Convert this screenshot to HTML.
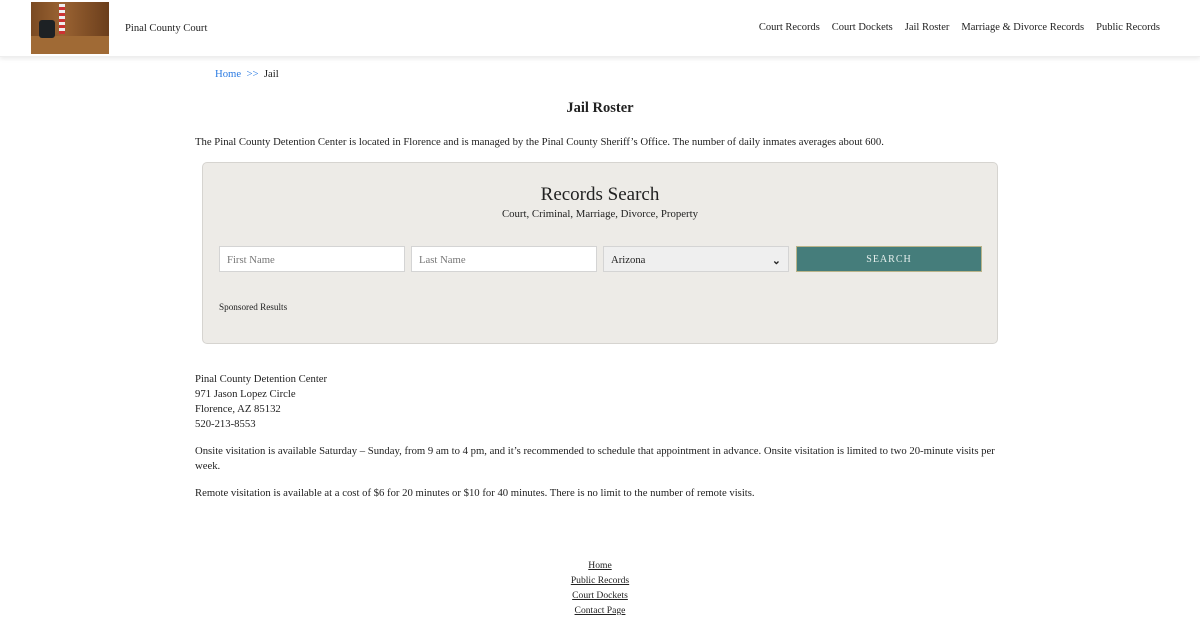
<!DOCTYPE html>
<html><head><style>
body{margin:0;background:#fff;font-family:"Liberation Serif",serif;color:#222;font-size:10.7px;}
.hdr{height:56px;position:relative;box-shadow:0 2px 4px rgba(0,0,0,.08);border-bottom:1px solid #eee}
.logo{position:absolute;left:31px;top:2px;width:78px;height:52px;background:linear-gradient(90deg,#7a4a22 0%,#9a6332 40%,#6b3e1c 100%)}
.logo .chair{position:absolute;left:8px;top:18px;width:16px;height:18px;background:#1d2124;border-radius:3px}
.logo .flag{position:absolute;left:28px;top:2px;width:6px;height:30px;background:repeating-linear-gradient(0deg,#c33 0 3px,#eee 3px 6px)}
.logo .desk{position:absolute;left:0;top:34px;width:78px;height:18px;background:#a06a35}
.site{position:absolute;left:125px;top:23px;font-size:10.6px}
.nav{position:absolute;right:40px;top:22px;font-size:10.5px}
.nav span{margin-left:12px}
.bc{position:absolute;left:215px;top:68px}
.bc a{color:#2a7ae2;text-decoration:none}
h1{position:absolute;left:0;width:1200px;text-align:center;top:100px;margin:0;font-size:14.5px;font-weight:bold}
p{margin:0}
.intro{position:absolute;left:195px;top:136px}
.box{position:absolute;left:202px;top:162px;width:794px;height:180px;background:#edebe7;border:1px solid #d6d4d0;border-radius:5px}
.box .t{position:absolute;width:100%;text-align:center;top:21px;font-size:19px}
.box .s{position:absolute;width:100%;text-align:center;top:45px;font-size:10.8px}
.in{position:absolute;top:83px;height:26px;background:#fff;border:1px solid #d4d4d4;box-sizing:border-box;color:#777;padding:7px 7px}
.sel{background:#efefef}
.btn{position:absolute;top:83px;left:593px;width:186px;height:26px;background:#457d7b;border:1px solid #b9b48a;box-sizing:border-box;color:#e7f0ee;text-align:center;line-height:25px;letter-spacing:1px;font-size:10px}
.sp{position:absolute;left:16px;top:139px;font-size:9.2px}
.addr{position:absolute;left:195px;top:372px;line-height:15px}
.p2{position:absolute;left:195px;top:444px;width:805px;line-height:15px}
.p3{position:absolute;left:195px;top:487px}
.ft{position:absolute;left:0;width:1200px;text-align:center;top:558px;line-height:15px;font-size:9.6px}
.ft div{text-decoration:underline}
</style></head><body>
<div class="hdr"><div class="logo"><div class="desk"></div><div class="chair"></div><div class="flag"></div></div>
<div class="site">Pinal County Court</div>
<div class="nav"><span>Court Records</span><span>Court Dockets</span><span>Jail Roster</span><span>Marriage &amp; Divorce Records</span><span>Public Records</span></div></div>
<div class="bc"><a>Home</a> <a>&nbsp;&gt;&gt;</a> &nbsp;Jail</div>
<h1>Jail Roster</h1>
<p class="intro">The Pinal County Detention Center is located in Florence and is managed by the Pinal County Sheriff’s Office. The number of daily inmates averages about 600.</p>
<div class="box"><div class="t">Records Search</div><div class="s">Court, Criminal, Marriage, Divorce, Property</div>
<div class="in" style="left:16px;width:186px">First Name</div>
<div class="in" style="left:208px;width:186px">Last Name</div>
<div class="in sel" style="left:400px;width:186px;color:#222">Arizona<span style="float:right;font-weight:bold">⌄</span></div>
<div class="btn">SEARCH</div>
<div class="sp">Sponsored Results</div></div>
<div class="addr">Pinal County Detention Center<br>971 Jason Lopez Circle<br>Florence, AZ 85132<br>520-213-8553</div>
<p class="p2">Onsite visitation is available Saturday – Sunday, from 9 am to 4 pm, and it’s recommended to schedule that appointment in advance. Onsite visitation is limited to two 20-minute visits per week.</p>
<p class="p3">Remote visitation is available at a cost of $6 for 20 minutes or $10 for 40 minutes. There is no limit to the number of remote visits.</p>
<div class="ft"><div>Home</div><div>Public Records</div><div>Court Dockets</div><div>Contact Page</div></div>
</body></html>
